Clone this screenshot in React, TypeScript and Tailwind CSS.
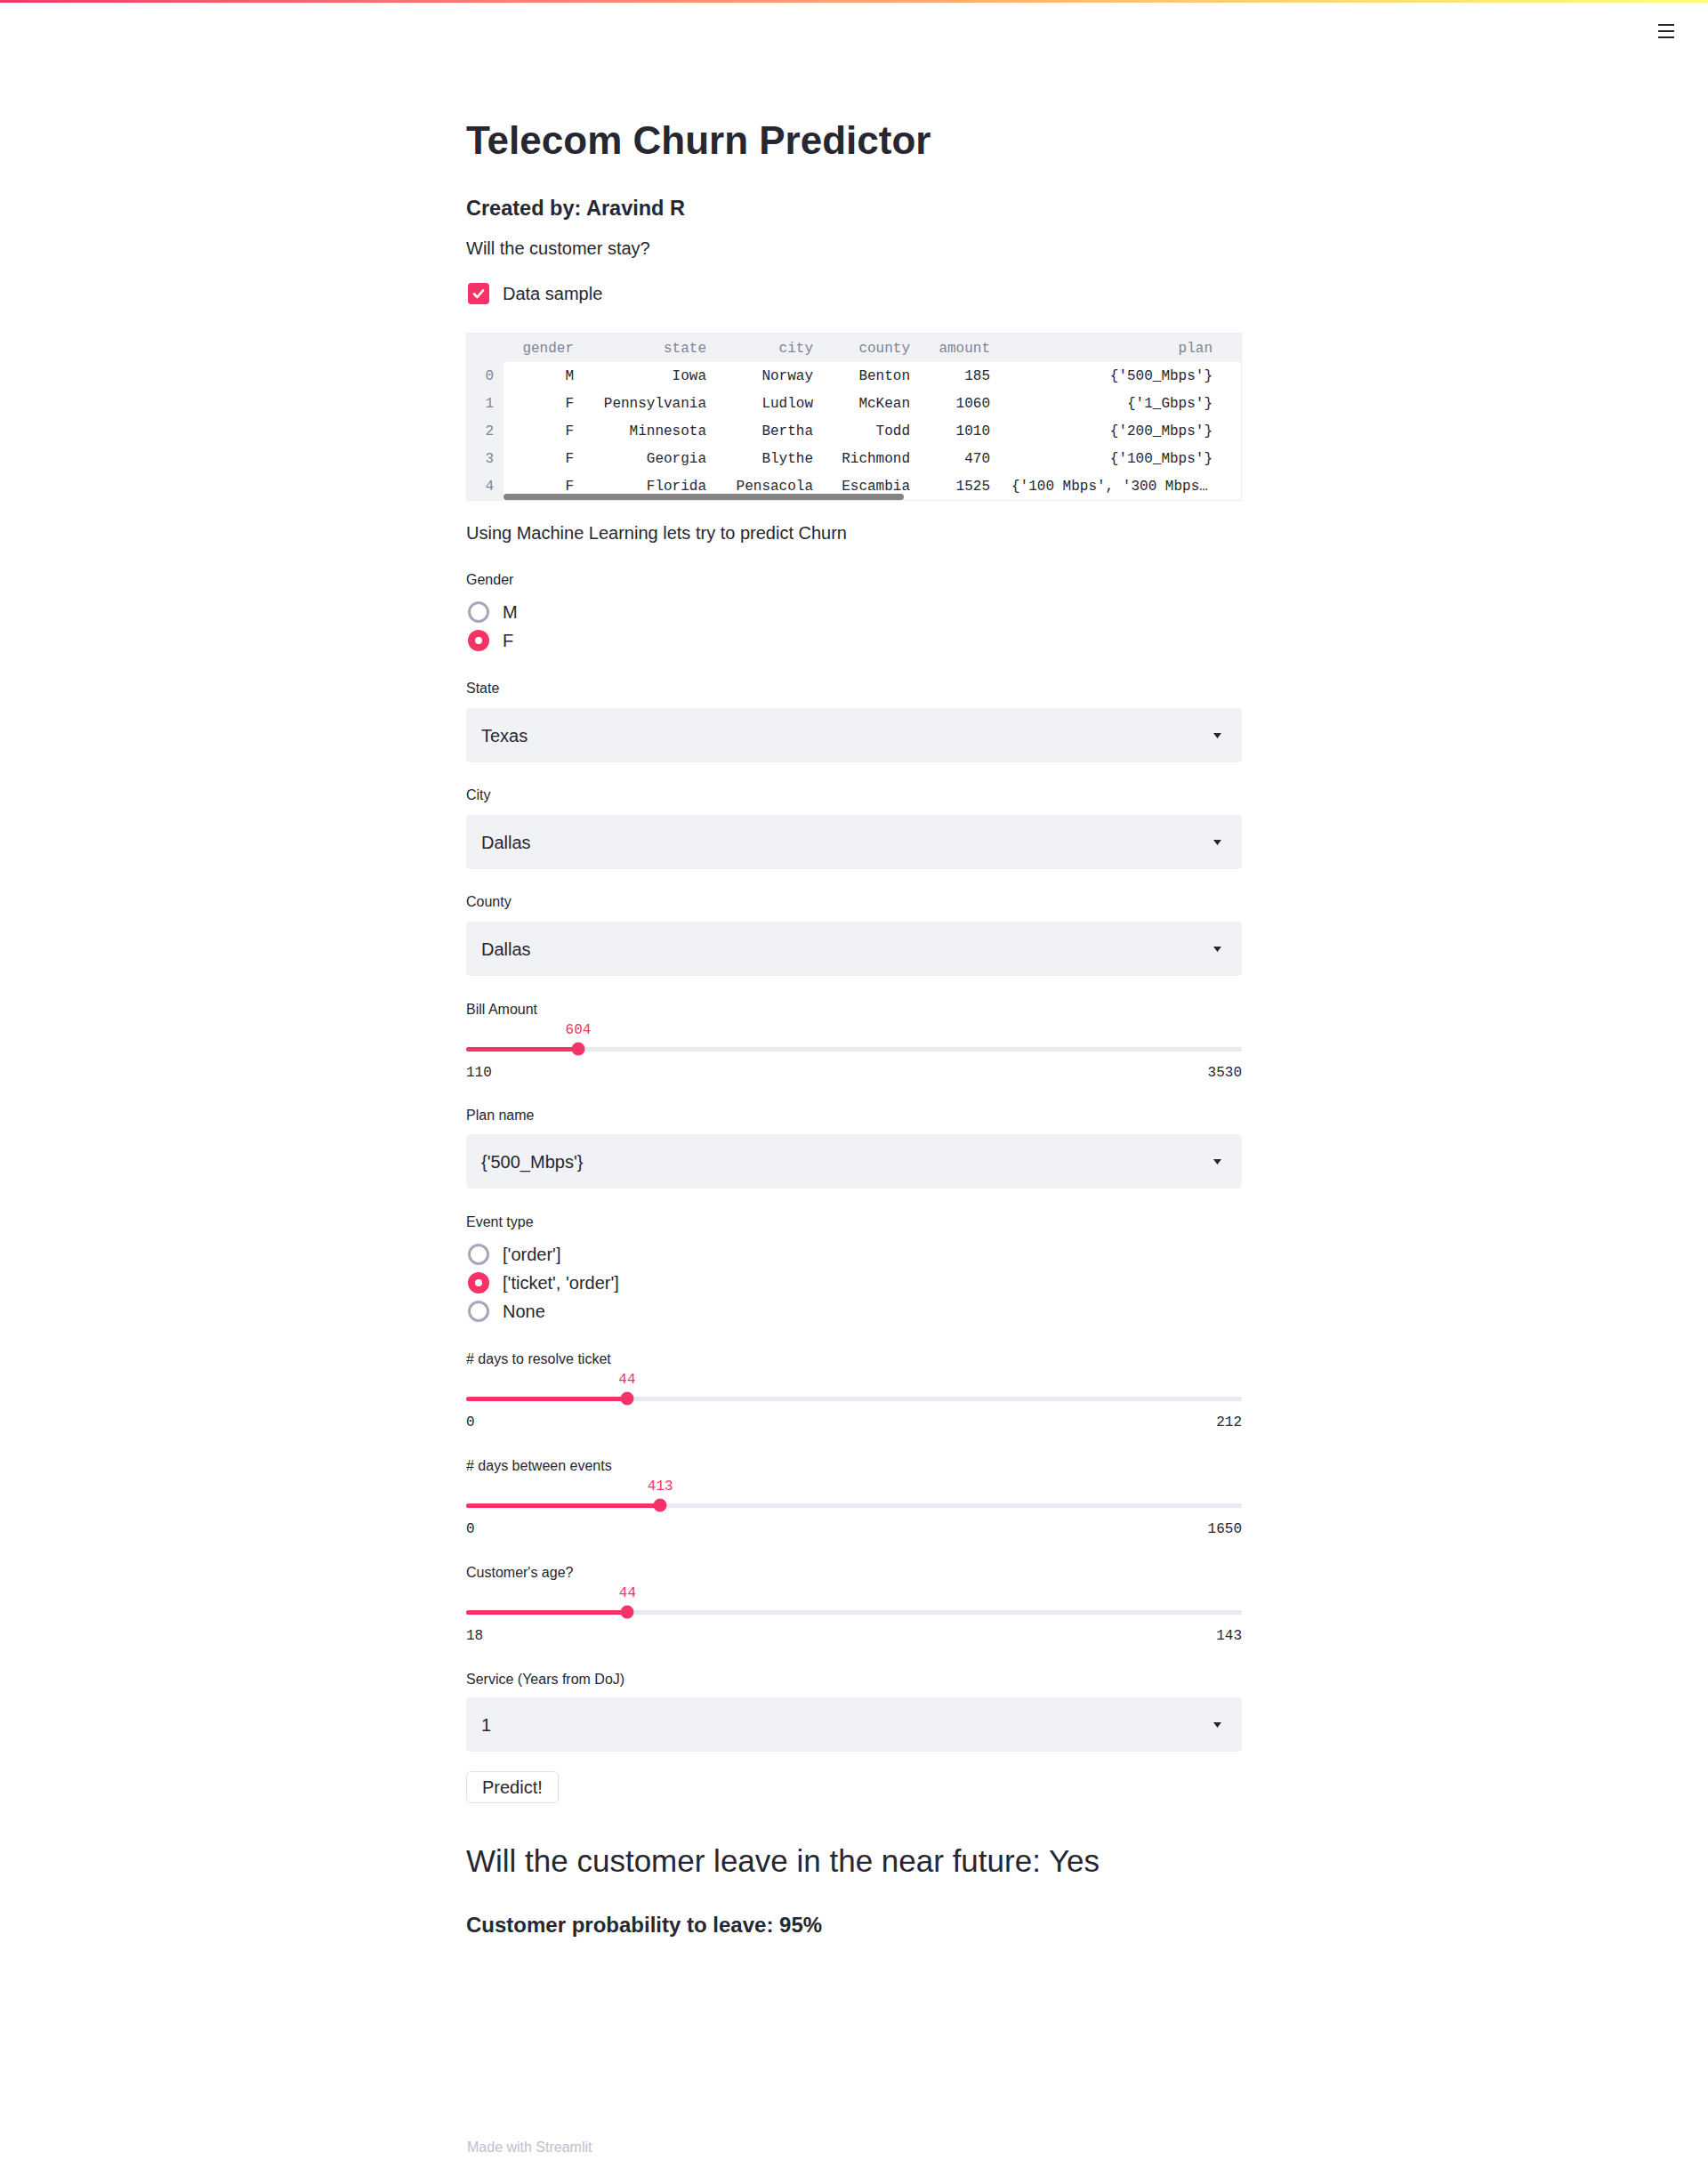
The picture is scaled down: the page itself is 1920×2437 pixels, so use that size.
import React from 'react';

// dataframe sample shown under the "Data sample" checkbox
const tableCols = [
  { key: 'gender', cls: 'w-[99px] pr-[20px]' },
  { key: 'state', cls: 'w-[149px] pr-[20px]' },
  { key: 'city', cls: 'w-[120px] pr-[20px]' },
  { key: 'county', cls: 'w-[109px] pr-[20px]' },
  { key: 'amount', cls: 'w-[90px] pr-[20px]' },
  { key: 'plan', cls: 'w-[250px] pl-[4px] pr-[20px]' },
];

const tableRows = [
  ['M', 'Iowa', 'Norway', 'Benton', '185', "{'500_Mbps'}"],
  ['F', 'Pennsylvania', 'Ludlow', 'McKean', '1060', "{'1_Gbps'}"],
  ['F', 'Minnesota', 'Bertha', 'Todd', '1010', "{'200_Mbps'}"],
  ['F', 'Georgia', 'Blythe', 'Richmond', '470', "{'100_Mbps'}"],
  ['F', 'Florida', 'Pensacola', 'Escambia', '1525', "{'100 Mbps', '300 Mbps', '1_Gbps'}"],
];

const mono = "font-['Liberation_Mono','DejaVu_Sans_Mono',monospace]";

const FieldLabel = ({ text }: { text: string }) => (
  <p className="h-[20px] text-[16px] leading-[20px] text-[#262730]">{text}</p>
);

const SelectBox = ({ value }: { value: string }) => (
  <div className="flex h-[61px] items-center justify-between rounded-[5px] bg-[#f0f2f6] pl-[17px] pr-[23px]">
    <span className="text-[20px] leading-[24px] text-[#262730]">{value}</span>
    <svg width="9" height="6" viewBox="0 0 9 6">
      <polygon points="0,0 9,0 4.5,6" fill="#262730" />
    </svg>
  </div>
);

const Radio = ({ label, checked }: { label: string; checked?: boolean }) => (
  <div className="flex h-[32px] items-center">
    {checked ? (
      <span className="ml-[2px] flex h-[24px] w-[24px] items-center justify-center rounded-full bg-[#f63366]">
        <span className="h-[8px] w-[8px] rounded-full bg-white" />
      </span>
    ) : (
      <span className="ml-[2px] h-[24px] w-[24px] rounded-full border-[3px] border-[#a6aab8]" />
    )}
    <span className="ml-[15px] text-[20px] leading-[24px] text-[#262730]">{label}</span>
  </div>
);

interface SliderProps {
  label: string;
  value: number;
  min: number;
  max: number;
}

const Slider = ({ label, value, min, max }: SliderProps) => {
  const pct = ((value - min) / (max - min)) * 100;
  return (
    <div>
      <FieldLabel text={label} />
      <div className="mt-[2px]">
        <div className="relative h-[20px]">
          <span
            className={`absolute top-[1px] -translate-x-1/2 text-[16px] leading-[20px] text-[#f63366] ${mono}`}
            style={{ left: `${pct}%` }}
          >
            {value}
          </span>
        </div>
        <div className="relative flex h-[24px] items-center">
          <div className="h-[5px] w-full rounded-full bg-[#e6eaf1]">
            <div className="h-full rounded-full bg-[#f63366]" style={{ width: `${pct}%` }} />
          </div>
          <span
            className="absolute top-1/2 h-[15px] w-[15px] -translate-x-1/2 -translate-y-1/2 rounded-full bg-[#f63366]"
            style={{ left: `${pct}%` }}
          />
        </div>
        <div className={`flex h-[24px] items-center justify-between pt-[6px] text-[16px] leading-[18px] text-[#262730] ${mono}`}>
          <span>{min}</span>
          <span>{max}</span>
        </div>
      </div>
    </div>
  );
};

const DataTable = () => (
  <div className={`relative h-[189px] overflow-hidden border border-[#eceef3] text-[16px] ${mono}`}>
    <div className="flex h-[32px] items-center bg-[#f0f2f6] pt-[1px] text-[#808495]">
      <div className="w-[41px]" />
      {tableCols.map((c) => (
        <div key={c.key} className={`text-right ${c.cls}`}>{c.key}</div>
      ))}
    </div>
    {tableRows.map((row, i) => (
      <div key={i} className="flex h-[31px]">
        <div className="flex w-[41px] items-center justify-end bg-[#f0f2f6] pr-[11px] pt-[1px] text-[#808495]">{i}</div>
        {row.map((cell, j) => (
          <div
            key={j}
            className={`flex items-center justify-end overflow-hidden pt-[1px] text-[#262730] ${tableCols[j].cls}`}
          >
            <span className="block w-full overflow-hidden text-right text-ellipsis whitespace-nowrap">{cell}</span>
          </div>
        ))}
      </div>
    ))}
    {/* horizontal scrollbar thumb */}
    <div className="absolute left-[41px] top-[180px] h-[7px] w-[450px] rounded-full bg-[#858585]" />
  </div>
);

export default function App() {
  return (
    <div className="relative min-h-[2437px] bg-white font-['Liberation_Sans',Arial,sans-serif] text-[#262730]">
      <div className="h-[3px] bg-linear-to-r from-[#f63366] to-[#fffd80]" />

      <button className="absolute right-[38px] top-[27px]">
        <svg width="18" height="16" viewBox="0 0 18 16">
          <rect x="0" y="0" width="18" height="2" fill="#262730" />
          <rect x="0" y="7" width="18" height="2" fill="#262730" />
          <rect x="0" y="14" width="18" height="2" fill="#262730" />
        </svg>
      </button>

      <main className="mx-auto flex w-[872px] flex-col pt-[129px] pb-[13px]">
        <h1 className="h-[52px] text-[44px] font-bold leading-[52px]">Telecom Churn Predictor</h1>
        <h3 className="mt-[34px] h-[32px] text-[23.5px] font-bold leading-[32px]">Created by: Aravind R</h3>
        <p className="mt-[15px] h-[28px] text-[20px] leading-[28px]">Will the customer stay?</p>

        <label className="mt-[25px] flex h-[24px] items-center">
          <span className="ml-[2px] flex h-[24px] w-[24px] items-center justify-center rounded-[4px] bg-[#f63366]">
            <svg width="16" height="16" viewBox="0 0 16 16">
              <polyline points="3,8.5 6.5,12 13,4.5" fill="none" stroke="white" strokeWidth="2.6" strokeLinecap="round" strokeLinejoin="round" />
            </svg>
          </span>
          <span className="ml-[15px] text-[20px] leading-[24px]">Data sample</span>
        </label>

        <div className="mt-[32px]">
          <DataTable />
        </div>

        <p className="mt-[22px] h-[28px] text-[20px] leading-[28px]">Using Machine Learning lets try to predict Churn</p>

        <div className="mt-[29px]">
          <FieldLabel text="Gender" />
          <div className="mt-[10px]">
            <Radio label="M" />
            <Radio label="F" checked />
          </div>
        </div>

        <div className="mt-[28px]">
          <FieldLabel text="State" />
          <div className="mt-[12px]">
            <SelectBox value="Texas" />
          </div>
        </div>

        <div className="mt-[27px]">
          <FieldLabel text="City" />
          <div className="mt-[12px]">
            <SelectBox value="Dallas" />
          </div>
        </div>

        <div className="mt-[27px]">
          <FieldLabel text="County" />
          <div className="mt-[12px]">
            <SelectBox value="Dallas" />
          </div>
        </div>

        <div className="mt-[28px]">
          <Slider label="Bill Amount" value={604} min={110} max={3530} />
        </div>

        <div className="mt-[29px]">
          <FieldLabel text="Plan name" />
          <div className="mt-[11px]">
            <SelectBox value="{'500_Mbps'}" />
          </div>
        </div>

        <div className="mt-[28px]">
          <FieldLabel text="Event type" />
          <div className="mt-[10px]">
            <Radio label="['order']" />
            <Radio label="['ticket', 'order']" checked />
            <Radio label="None" />
          </div>
        </div>

        <div className="mt-[28px]">
          <Slider label="# days to resolve ticket" value={44} min={0} max={212} />
        </div>
        <div className="mt-[30px]">
          <Slider label="# days between events" value={413} min={0} max={1650} />
        </div>
        <div className="mt-[30px]">
          <Slider label="Customer's age?" value={44} min={18} max={143} />
        </div>

        <div className="mt-[30px]">
          <FieldLabel text="Service (Years from DoJ)" />
          <div className="mt-[10px]">
            <SelectBox value="1" />
          </div>
        </div>

        <div className="mt-[22px]">
          <button className="h-[36px] rounded-[5px] border border-[#dfe1e7] bg-white px-[17px] text-[20px] leading-[24px] text-[#262730]">
            Predict!
          </button>
        </div>

        <h2 className="mt-[43px] h-[44px] text-[35px] font-normal leading-[44px]">
          Will the customer leave in the near future: Yes
        </h2>
        <h3 className="mt-[34px] h-[32px] text-[24px] font-bold leading-[32px]">Customer probability to leave: 95%</h3>

        <footer className="mt-[224px] h-[20px] pl-[1px] text-[16px] leading-[20px] text-[#bcc1d0]">Made with Streamlit</footer>
      </main>
    </div>
  );
}
